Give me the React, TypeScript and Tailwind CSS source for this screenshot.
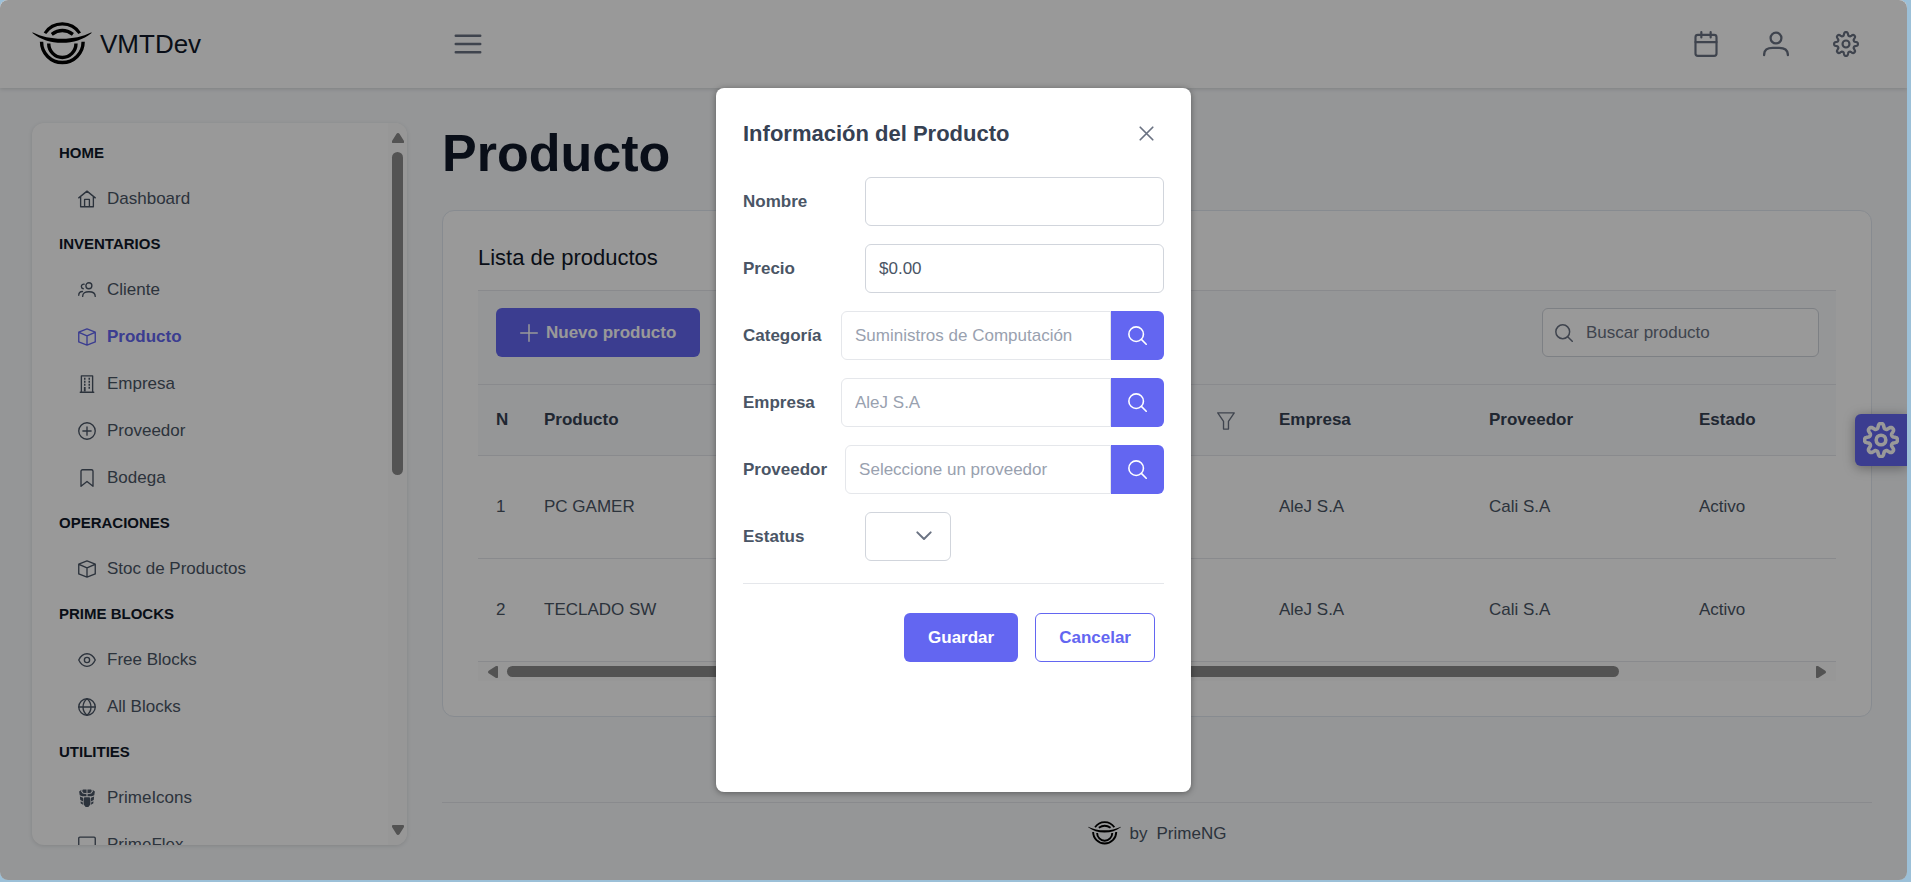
import React from "react";

type IconProps = { className?: string };

function Icon({ className, children, stroke = 1.8 }: IconProps & { children: React.ReactNode; stroke?: number }) {
  return (
    <svg
      viewBox="0 0 24 24"
      className={className}
      fill="none"
      stroke="currentColor"
      strokeWidth={stroke}
      strokeLinecap="round"
      strokeLinejoin="round"
      aria-hidden="true"
    >
      {children}
    </svg>
  );
}

const gearPath =
  Array.from({ length: 161 }, (_, i) => {
    const a = (i / 160) * Math.PI * 2;
    const wave = Math.tanh(1.6 * Math.cos(8 * a)) / Math.tanh(1.6);
    const r = 9.4 + 1.6 * wave;
    return `${i === 0 ? "M" : "L"}${(12 + r * Math.sin(a)).toFixed(2)} ${(12 - r * Math.cos(a)).toFixed(2)}`;
  }).join("") + "Z";

const Gear = (p: IconProps & { stroke?: number }) => (
  <Icon {...p}>
    <path d={gearPath} />
    <circle cx="12" cy="12" r="3.2" />
  </Icon>
);
const Search = (p: IconProps) => (
  <Icon {...p} stroke={2}>
    <circle cx="10.3" cy="10.3" r="9.2" />
    <path d="M16.9 16.9 23 23" />
  </Icon>
);
const Home = (p: IconProps) => (
  <Icon {...p}>
    <path d="M1 10.5 12 1.5l11 9M3.500 8.800V22.300h17V8.800M8.800 22V12.500h6.400V22" />
  </Icon>
);
const Users = (p: IconProps) => (
  <Icon {...p}>
    <circle cx="14.500" cy="6.300" r="4" />
    <path d="M6.200 20.500c0-4.700 3.200-6.200 8.400-6.200s8.400 1.500 8.400 6.200" />
    <path d="M8.200 4.200C6 4 4.500 5.300 4.500 7.300c0 1.500 1 2.700 2.500 3M1 19c0-3.300 1.600-4.900 5-5" />
  </Icon>
);
const Box = (p: IconProps) => (
  <Icon {...p}>
    <path d="M12 1.200 23 5.500v13L12 22.800 1 18.500v-13L12 1.200ZM1.300 5.700 12 10.500l10.700-4.800M12 10.500v12" />
  </Icon>
);
const Building = (p: IconProps) => (
  <Icon {...p}>
    <path d="M4.500 23V1.200h15V23M3 23h18" />
    <path
      d="M8 5h2M14 5h2M8 9h2M14 9h2M8 13h2M14 13h2M14 17h2M9 16v6"
      strokeWidth="2.400"
      strokeLinecap="butt"
    />
  </Icon>
);
const PlusCircle = (p: IconProps) => (
  <Icon {...p}>
    <circle cx="12" cy="12" r="11" />
    <path d="M12 6.500v11M6.500 12h11" />
  </Icon>
);
const Bookmark = (p: IconProps) => (
  <Icon {...p}>
    <path d="M4 23V3a2 2 0 0 1 2-2h12a2 2 0 0 1 2 2v20l-8-6.300L4 23Z" />
  </Icon>
);
const Eye = (p: IconProps) => (
  <Icon {...p}>
    <path d="M1 12c2.600-5.600 6.300-8.400 11-8.400S20.400 6.400 23 12c-2.600 5.600-6.300 8.400-11 8.400S3.600 17.600 1 12Z" />
    <circle cx="12" cy="12" r="3.500" />
  </Icon>
);
const Globe = (p: IconProps) => (
  <Icon {...p}>
    <circle cx="12" cy="12" r="11" />
    <path d="M1 12h22M12 1C8.500 3.800 6.700 7.500 6.700 12s1.800 8.200 5.300 11c3.500-2.800 5.300-6.500 5.300-11S15.500 3.800 12 1Z" />
  </Icon>
);
const Prime = ({ className }: IconProps) => (
  <svg viewBox="0 0 24 24" className={className} fill="currentColor" aria-hidden="true">
    <path d="M6.500.5h4.900v5.300L7 5 5.500 2.500 6.500.5ZM17.500.5h-4.900v5.300L17 5l1.500-2.500-1-2ZM4.800 1 1.500 3.200l.8 5 3.200 1.300h5.800V7L6.200 6 4 3l.8-2ZM19.200 1l3.300 2.200-.8 5-3.200 1.300h-5.800V7l5.100-1L20 3l-.8-2Z" />
    <path d="M8.500 11h7l1 2v7.500L13.800 24h-3.600l-2.700-3.500V13l1-2ZM2.500 10l4.200 1.500v5L3 14.500 2.500 10ZM21.500 10l-4.200 1.500v5l3.700-2 .5-4.500ZM3.500 16.300l3 1.700v3l-3-2v-2.700ZM20.500 16.300l-3 1.700v3l3-2v-2.700Z" />
  </svg>
);
const Desktop = (p: IconProps) => (
  <Icon {...p}>
    <path d="M2.500 1.500h19A1.500 1.500 0 0 1 23 3v13.500a1.500 1.500 0 0 1-1.500 1.500h-19A1.500 1.500 0 0 1 1 16.500V3a1.500 1.500 0 0 1 1.500-1.500ZM12 18v4.500M7 22.500h10" />
  </Icon>
);
const Calendar = (p: IconProps) => (
  <Icon {...p} stroke={2}>
    <rect x="2.300" y="3.500" width="19.400" height="19.500" rx="2.200" />
    <path d="M2.300 10.200h19.400M7.700 1v5M16.300 1v5" />
  </Icon>
);
const User = (p: IconProps) => (
  <Icon {...p} stroke={2.1}>
    <circle cx="12" cy="6.500" r="5" />
    <path d="M1 22.300c0-5 3-6.800 8-6.800h6c5 0 8 1.800 8 6.800" />
  </Icon>
);
const Bars = (p: IconProps) => (
  <Icon {...p} stroke={2.1}>
    <path d="M1.500 5h21M1.500 12h21M1.500 19h21" />
  </Icon>
);
const Plus = (p: IconProps) => (
  <Icon {...p} stroke={2}>
    <path d="M12 1v22M1 12h22" />
  </Icon>
);
const Times = (p: IconProps) => (
  <Icon {...p} stroke={2.8}>
    <path d="M2 2l20 20M22 2 2 22" />
  </Icon>
);
const ChevronDown = (p: IconProps) => (
  <Icon {...p} stroke={3}>
    <path d="M2 6.500l10 10 10-10" />
  </Icon>
);
const Filter = (p: IconProps) => (
  <Icon {...p} stroke={1.8}>
    <path d="M1 1.200h22l-7.700 11.300v10.300H8.700V12.500L1 1.200Z" />
  </Icon>
);

function Logo({ className }: IconProps) {
  return (
    <svg viewBox="0 0 174 132" className={className} fill="none" stroke="#000" aria-hidden="true">
      <path d="M37 33a61 61 0 0 1 102 0" strokeWidth="9" />
      <path d="M27 58a61 61 0 1 0 122 0" strokeWidth="10" />
      <path d="M57 36q31-22 62 0" strokeWidth="10" />
      <path d="M48 63a40 41 0 0 0 80 0" strokeWidth="10" />
      <path d="M0 30c28 13 54 19 87 19s59-6 87-19l-1 3c-24 19-52 28-86 28S25 52 1 33Z" fill="#000" stroke="none" />
    </svg>
  );
}

type Section = { title: string; items: { label: string; icon: React.FC<IconProps>; active?: boolean }[] };

const menu: Section[] = [
  { title: "HOME", items: [{ label: "Dashboard", icon: Home }] },
  {
    title: "INVENTARIOS",
    items: [
      { label: "Cliente", icon: Users },
      { label: "Producto", icon: Box, active: true },
      { label: "Empresa", icon: Building },
      { label: "Proveedor", icon: PlusCircle },
      { label: "Bodega", icon: Bookmark },
    ],
  },
  { title: "OPERACIONES", items: [{ label: "Stoc de Productos", icon: Box }] },
  {
    title: "PRIME BLOCKS",
    items: [
      { label: "Free Blocks", icon: Eye },
      { label: "All Blocks", icon: Globe },
    ],
  },
  {
    title: "UTILITIES",
    items: [
      { label: "PrimeIcons", icon: Prime },
      { label: "PrimeFlex", icon: Desktop },
    ],
  },
];

const rows = [
  { n: 1, name: "PC GAMER", company: "AleJ S.A", supplier: "Cali S.A", state: "Activo" },
  { n: 2, name: "TECLADO SW", company: "AleJ S.A", supplier: "Cali S.A", state: "Activo" },
];

function Topbar() {
  return (
    <header className="relative z-10 flex h-[88px] shrink-0 items-center bg-white pr-12 pl-8 shadow-[0_1px_4px_rgba(0,0,0,0.15)]">
      <a href="#" className="flex w-[422px] items-center gap-2 text-[26px] text-gray-900">
        <Logo className="h-[45px] w-[60px]" />
        <span>VMTDev</span>
      </a>
      <button type="button" aria-label="Menu" className="text-gray-500">
        <Bars className="size-7" />
      </button>
      <div className="ml-auto flex items-center gap-11 text-gray-500">
        <button type="button" aria-label="Calendar">
          <Calendar className="size-[26px]" />
        </button>
        <button type="button" aria-label="Profile">
          <User className="size-[26px]" />
        </button>
        <button type="button" aria-label="Settings">
          <Gear className="size-[26px]" stroke={2} />
        </button>
      </div>
    </header>
  );
}

function Sidebar() {
  return (
    <aside className="my-[35px] ml-8 flex w-[375px] shrink-0 overflow-hidden rounded-xl bg-white shadow-[0_1px_4px_rgba(0,0,0,0.12)]">
      <nav className="flex-1 overflow-hidden pt-2 pl-[27px]">
        {menu.map((section) => (
          <section key={section.title}>
            <h2 className="flex h-11 items-center text-[15px] font-bold text-gray-900">{section.title}</h2>
            <ul>
              {section.items.map(({ label, icon: ItemIcon, active }) => (
                <li key={label}>
                  <a
                    href="#"
                    className={
                      active
                        ? "flex h-[47px] items-center gap-[11px] pl-[19px] font-bold text-[#6366f1]"
                        : "flex h-[47px] items-center gap-[11px] pl-[19px] text-gray-600"
                    }
                  >
                    <ItemIcon className="size-[18px]" />
                    {label}
                  </a>
                </li>
              ))}
            </ul>
          </section>
        ))}
      </nav>
      <div className="flex w-[19px] flex-col items-center bg-[#fcfcfc] py-2.5">
        <svg viewBox="0 0 12 10" className="h-2.5 w-3 fill-[#8b8b8b]" aria-hidden="true">
          <path d="M6 0q1 0 1.600 1L12 8q.4 2-1 2H1q-1.400 0-1-2l4.400-7Q5 0 6 0Z" />
        </svg>
        <div className="mt-[9px] h-[46%] w-[11px] rounded-full bg-[#8b8b8b]" />
        <svg viewBox="0 0 12 10" className="mt-auto h-2.5 w-3 fill-[#8b8b8b]" aria-hidden="true">
          <path d="M6 10q1 0 1.600-1L12 2q.4-2-1-2H1Q-.4 0 0 2l4.400 7Q5 10 6 10Z" />
        </svg>
      </div>
    </aside>
  );
}

function ProductCard() {
  return (
    <section className="mt-[27px] rounded-xl border border-slate-200 bg-white px-[35px] pt-[33px] pb-[35px]">
      <h2 className="text-[22px] leading-7 text-gray-900">Lista de productos</h2>
      <div className="mt-[18px] flex items-start justify-between border-t border-gray-200 bg-slate-50 pt-[17px] pr-[17px] pb-[27px] pl-[18px]">
        <button
          type="button"
          className="flex h-[49px] items-center gap-2 rounded-md bg-[#6366f1] px-6 font-bold text-white"
        >
          <Plus className="size-[18px]" />
          Nuevo producto
        </button>
        <label className="flex h-[49px] w-[277px] items-center gap-[13px] rounded-md border border-gray-300 bg-white px-3 text-gray-500">
          <Search className="size-[18px] shrink-0" />
          <input
            type="text"
            aria-label="Buscar producto"
            placeholder="Buscar producto"
            className="w-full min-w-0 bg-transparent outline-none placeholder:text-gray-500"
          />
        </label>
      </div>
      <table className="w-full table-fixed border-collapse text-left text-gray-600">
        <thead>
          <tr className="h-[71px] border-y border-gray-200 bg-slate-50 text-gray-700">
            <th className="w-[48px] pl-[18px]">N</th>
            <th className="pl-[18px]">Producto</th>
            <th className="pr-[26px] text-right">
              <button type="button" aria-label="Filtrar" className="align-middle text-gray-500">
                <Filter className="size-[18px]" />
              </button>
            </th>
            <th className="w-[210px] pl-[18px]">Empresa</th>
            <th className="w-[210px] pl-[18px]">Proveedor</th>
            <th className="w-[155px] pl-[18px]">Estado</th>
          </tr>
        </thead>
        <tbody>
          {rows.map((r) => (
            <tr key={r.n} className="h-[103px] border-b border-gray-200">
              <td className="pl-[18px]">{r.n}</td>
              <td className="pl-[18px]">{r.name}</td>
              <td />
              <td className="pl-[18px]">{r.company}</td>
              <td className="pl-[18px]">{r.supplier}</td>
              <td className="pl-[18px]">{r.state}</td>
            </tr>
          ))}
        </tbody>
      </table>
      <div className="flex h-[19px] items-center bg-[#fcfcfc] px-2.5">
        <svg viewBox="0 0 10 12" className="h-3 w-2.5 fill-[#8b8b8b]" aria-hidden="true">
          <path d="M0 6q0-1 1-1.600L8 0q2-.4 2 1v10q0 1.400-2 1L1 7.600Q0 7 0 6Z" />
        </svg>
        <div className="mx-[9px] flex-1">
          <div className="h-[11px] w-[85.5%] rounded-full bg-[#8b8b8b]" />
        </div>
        <svg viewBox="0 0 10 12" className="h-3 w-2.5 fill-[#8b8b8b]" aria-hidden="true">
          <path d="M10 6q0-1-1-1.600L2 0Q0-.4 0 1v10q0 1.400 2 1l7-4.400Q10 7 10 6Z" />
        </svg>
      </div>
    </section>
  );
}

function LookupField({ id, label, value, placeholder }: { id: string; label: string; value?: string; placeholder?: string }) {
  return (
    <div className="flex h-[49px] items-center">
      <label htmlFor={id} className="mr-[18px] min-w-[80px] shrink-0 font-bold text-gray-600">
        {label}
      </label>
      <input
        id={id}
        type="text"
        disabled
        defaultValue={value}
        placeholder={placeholder}
        className="h-full w-full min-w-0 flex-1 rounded-l-md border border-gray-200 bg-white px-[13px] text-gray-400 placeholder:text-gray-400"
      />
      <button
        type="button"
        aria-label={`Buscar ${label}`}
        className="flex h-full w-[53px] shrink-0 items-center justify-center rounded-r-md bg-[#6366f1] text-white"
      >
        <Search className="size-[19px]" />
      </button>
    </div>
  );
}

function TextField({ id, label, value }: { id: string; label: string; value: string }) {
  return (
    <div className="flex h-[49px] items-center">
      <label htmlFor={id} className="w-[122px] shrink-0 font-bold text-gray-600">
        {label}
      </label>
      <input
        id={id}
        type="text"
        defaultValue={value}
        className="h-full w-full min-w-0 flex-1 rounded-md border border-gray-300 bg-white px-[13px] text-gray-600"
      />
    </div>
  );
}

function ProductDialog() {
  return (
    <div
      role="dialog"
      aria-modal="true"
      aria-labelledby="dialog-title"
      className="flex h-[80%] max-h-full w-[475px] flex-col rounded-lg bg-white px-[27px] pt-[27px] shadow-[0_1px_6px_rgba(0,0,0,0.4)]"
    >
      <div className="flex h-9 items-center justify-between">
        <h2 id="dialog-title" className="text-[22px] font-bold text-gray-700">
          Información del Producto
        </h2>
        <button type="button" aria-label="Cerrar" className="flex size-9 items-center justify-center text-gray-500">
          <Times className="size-[15px]" />
        </button>
      </div>
      <form className="mt-[26px] flex flex-col gap-[18px]">
        <TextField id="nombre" label="Nombre" value="" />
        <TextField id="precio" label="Precio" value="$0.00" />
        <LookupField id="categoria" label="Categoría" value="Suministros de Computación" />
        <LookupField id="empresa" label="Empresa" value="AleJ S.A" />
        <LookupField id="proveedor" label="Proveedor" placeholder="Seleccione un proveedor" />
        <div className="flex h-[49px] items-center">
          <label htmlFor="estatus" className="w-[122px] shrink-0 font-bold text-gray-600">
            Estatus
          </label>
          <div className="relative h-full w-[86px]">
            <select id="estatus" className="h-full w-full appearance-none rounded-md border border-gray-300 bg-white">
              <option value="" />
            </select>
            <ChevronDown className="pointer-events-none absolute top-4 right-[19px] size-4 text-gray-500" />
          </div>
        </div>
        <div className="mt-1 flex justify-end gap-[17px] border-t border-gray-200 pt-[29px] pr-[9px]">
          <button type="button" className="h-[49px] rounded-md bg-[#6366f1] px-6 font-bold text-white">
            Guardar
          </button>
          <button
            type="button"
            className="h-[49px] rounded-md border border-[#6366f1] bg-white px-[23px] font-bold text-[#6366f1]"
          >
            Cancelar
          </button>
        </div>
      </form>
    </div>
  );
}

export default function App() {
  return (
    <div className="h-screen bg-[#9cc0d8] pr-1 pb-0.5 font-['Liberation_Sans',Arial,sans-serif] text-[17px]">
      <div className="relative flex h-full flex-col overflow-hidden rounded-lg bg-slate-50">
        <Topbar />
        <div className="flex min-h-0 flex-1">
          <Sidebar />
          <main className="flex min-w-0 flex-1 flex-col px-[35px] pt-[35px]">
            <h1 className="text-[52px] leading-[60px] font-bold text-gray-900">Producto</h1>
            <ProductCard />
            <footer className="mt-auto flex h-[78px] shrink-0 items-start justify-center gap-[9px] border-t border-gray-200 pt-[18px] text-gray-600">
              <Logo className="h-[25px] w-[33px]" />
              <span>by</span>
              <span>PrimeNG</span>
            </footer>
          </main>
        </div>
        <button
          type="button"
          aria-label="Configuración"
          className="absolute top-1/2 right-0 flex size-[52px] -translate-y-1/2 items-center justify-center rounded-l-md bg-[#6366f1] text-white shadow-[0_2px_12px_rgba(0,0,0,0.35)]"
        >
          <Gear className="size-[36px]" stroke={2.4} />
        </button>
        <div className="absolute inset-0 z-20 flex items-center justify-center bg-black/40">
          <ProductDialog />
        </div>
      </div>
    </div>
  );
}
